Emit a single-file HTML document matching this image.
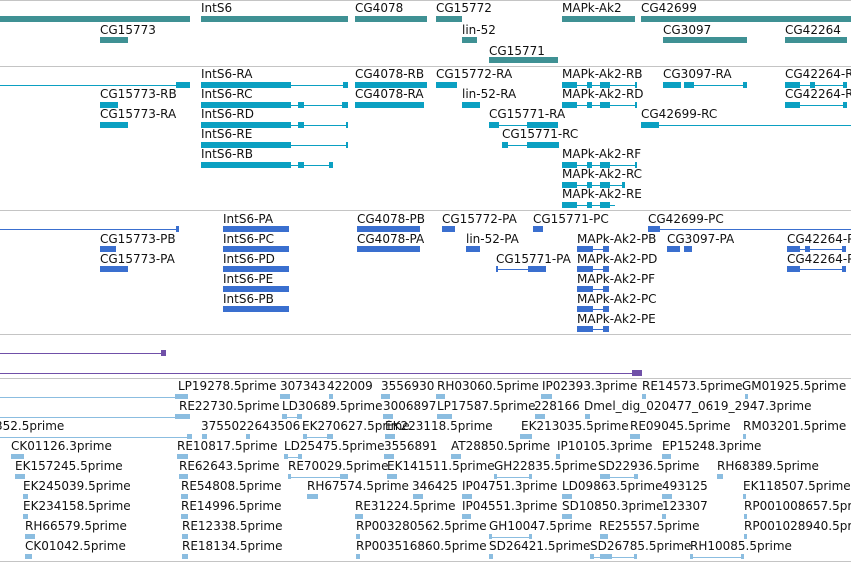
<!DOCTYPE html>
<html><head><meta charset="utf-8"><style>
body{margin:0;width:851px;height:562px;overflow:hidden;background:#fff;position:relative;font-family:"DejaVu Sans","Liberation Sans",sans-serif}
.t{position:absolute;font-size:12px;line-height:12px;color:#111;white-space:nowrap}
i{position:absolute;display:block}
.g{background:#3f9194}.c{background:#0ba0c2}.p{background:#3a6fcf}.e{background:#8bbde0}.u{background:#7050a8}
.s{position:absolute;left:0;width:851px;height:1px;background:#c4c4c4}
</style></head><body>
<div class="s" style="top:0"></div><div class="s" style="top:66"></div>
<div class="s" style="top:66px"></div><div class="s" style="top:210px"></div><div class="s" style="top:334px"></div><div class="s" style="top:378px"></div><div class="s" style="top:561px"></div>

<!-- gene track -->
<div class="t" style="left:201px;top:2px">IntS6</div><div class="t" style="left:355px;top:2px">CG4078</div><div class="t" style="left:436px;top:2px">CG15772</div><div class="t" style="left:562px;top:2px">MAPk-Ak2</div><div class="t" style="left:641px;top:2px">CG42699</div>
<div class="t" style="left:100px;top:24px">CG15773</div><div class="t" style="left:462px;top:24px">lin-52</div><div class="t" style="left:663px;top:24px">CG3097</div><div class="t" style="left:785px;top:24px">CG42264</div>
<div class="t" style="left:489px;top:45px">CG15771</div>
<i class="g" style="left:0;top:16px;width:190px;height:6px"></i><i class="g" style="left:201px;top:16px;width:147px;height:6px"></i><i class="g" style="left:355px;top:16px;width:72px;height:6px"></i><i class="g" style="left:436px;top:16px;width:26px;height:6px"></i><i class="g" style="left:562px;top:16px;width:73px;height:6px"></i><i class="g" style="left:641px;top:16px;width:210px;height:6px"></i>
<i class="g" style="left:100px;top:37px;width:28px;height:6px"></i><i class="g" style="left:462px;top:37px;width:15px;height:6px"></i><i class="g" style="left:663px;top:37px;width:84px;height:6px"></i><i class="g" style="left:785px;top:37px;width:62px;height:6px"></i>
<i class="g" style="left:489px;top:57px;width:69px;height:6px"></i>

<!-- transcript track -->
<div class="t" style="left:201px;top:68px">IntS6-RA</div><div class="t" style="left:355px;top:68px">CG4078-RB</div><div class="t" style="left:436px;top:68px">CG15772-RA</div><div class="t" style="left:562px;top:68px">MAPk-Ak2-RB</div><div class="t" style="left:663px;top:68px">CG3097-RA</div><div class="t" style="left:785px;top:68px">CG42264-RB</div>
<div class="t" style="left:100px;top:88px">CG15773-RB</div><div class="t" style="left:201px;top:88px">IntS6-RC</div><div class="t" style="left:355px;top:88px">CG4078-RA</div><div class="t" style="left:462px;top:88px">lin-52-RA</div><div class="t" style="left:562px;top:88px">MAPk-Ak2-RD</div><div class="t" style="left:785px;top:88px">CG42264-RA</div>
<div class="t" style="left:100px;top:108px">CG15773-RA</div><div class="t" style="left:201px;top:108px">IntS6-RD</div><div class="t" style="left:489px;top:108px">CG15771-RA</div><div class="t" style="left:641px;top:108px">CG42699-RC</div>
<div class="t" style="left:201px;top:128px">IntS6-RE</div><div class="t" style="left:502px;top:128px">CG15771-RC</div>
<div class="t" style="left:201px;top:148px">IntS6-RB</div><div class="t" style="left:562px;top:148px">MAPk-Ak2-RF</div>
<div class="t" style="left:562px;top:168px">MAPk-Ak2-RC</div>
<div class="t" style="left:562px;top:188px">MAPk-Ak2-RE</div>
<!-- r0 -->
<i class="c" style="left:0;top:85px;width:176px;height:1px"></i><i class="c" style="left:176px;top:82px;width:14px;height:6px"></i>
<i class="c" style="left:201px;top:82px;width:90px;height:6px"></i><i class="c" style="left:291px;top:85px;width:57px;height:1px"></i><i class="c" style="left:343px;top:82px;width:5px;height:6px"></i>
<i class="c" style="left:355px;top:82px;width:72px;height:6px"></i><i class="c" style="left:436px;top:82px;width:21px;height:6px"></i>
<i class="c" style="left:562px;top:82px;width:15px;height:6px"></i><i class="c" style="left:577px;top:85px;width:60px;height:1px"></i><i class="c" style="left:587px;top:82px;width:5px;height:6px"></i><i class="c" style="left:600px;top:82px;width:10px;height:6px"></i><i class="c" style="left:635px;top:82px;width:2px;height:6px"></i>
<i class="c" style="left:663px;top:82px;width:18px;height:6px"></i><i class="c" style="left:684px;top:82px;width:10px;height:6px"></i><i class="c" style="left:694px;top:85px;width:53px;height:1px"></i><i class="c" style="left:743px;top:82px;width:4px;height:6px"></i>
<i class="c" style="left:785px;top:82px;width:15px;height:6px"></i><i class="c" style="left:810px;top:82px;width:5px;height:6px"></i><i class="c" style="left:800px;top:85px;width:47px;height:1px"></i><i class="c" style="left:843px;top:82px;width:4px;height:6px"></i>
<!-- r1 -->
<i class="c" style="left:100px;top:102px;width:18px;height:6px"></i>
<i class="c" style="left:201px;top:102px;width:90px;height:6px"></i><i class="c" style="left:291px;top:105px;width:57px;height:1px"></i><i class="c" style="left:298px;top:102px;width:6px;height:6px"></i><i class="c" style="left:342px;top:102px;width:6px;height:6px"></i>
<i class="c" style="left:355px;top:102px;width:69px;height:6px"></i><i class="c" style="left:462px;top:102px;width:18px;height:6px"></i>
<i class="c" style="left:562px;top:102px;width:15px;height:6px"></i><i class="c" style="left:577px;top:105px;width:60px;height:1px"></i><i class="c" style="left:587px;top:102px;width:5px;height:6px"></i><i class="c" style="left:600px;top:102px;width:10px;height:6px"></i><i class="c" style="left:635px;top:102px;width:2px;height:6px"></i>
<i class="c" style="left:785px;top:102px;width:15px;height:6px"></i><i class="c" style="left:800px;top:105px;width:47px;height:1px"></i><i class="c" style="left:843px;top:102px;width:4px;height:6px"></i>
<!-- r2 -->
<i class="c" style="left:100px;top:122px;width:28px;height:6px"></i>
<i class="c" style="left:201px;top:122px;width:90px;height:6px"></i><i class="c" style="left:291px;top:125px;width:57px;height:1px"></i><i class="c" style="left:298px;top:122px;width:6px;height:6px"></i><i class="c" style="left:346px;top:122px;width:2px;height:6px"></i>
<i class="c" style="left:489px;top:122px;width:10px;height:6px"></i><i class="c" style="left:499px;top:125px;width:28px;height:1px"></i><i class="c" style="left:527px;top:122px;width:31px;height:6px"></i>
<i class="c" style="left:641px;top:122px;width:18px;height:6px"></i><i class="c" style="left:659px;top:125px;width:192px;height:1px"></i>
<!-- r3 -->
<i class="c" style="left:201px;top:142px;width:90px;height:6px"></i><i class="c" style="left:291px;top:145px;width:57px;height:1px"></i><i class="c" style="left:346px;top:142px;width:2px;height:6px"></i>
<i class="c" style="left:502px;top:142px;width:6px;height:6px"></i><i class="c" style="left:508px;top:145px;width:19px;height:1px"></i><i class="c" style="left:527px;top:142px;width:32px;height:6px"></i>
<!-- r4-6 -->
<i class="c" style="left:201px;top:162px;width:90px;height:6px"></i><i class="c" style="left:291px;top:165px;width:42px;height:1px"></i><i class="c" style="left:298px;top:162px;width:6px;height:6px"></i><i class="c" style="left:329px;top:162px;width:4px;height:6px"></i>
<i class="c" style="left:562px;top:162px;width:15px;height:6px"></i><i class="c" style="left:577px;top:165px;width:60px;height:1px"></i><i class="c" style="left:587px;top:162px;width:5px;height:6px"></i><i class="c" style="left:600px;top:162px;width:10px;height:6px"></i><i class="c" style="left:635px;top:162px;width:2px;height:6px"></i>
<i class="c" style="left:562px;top:182px;width:15px;height:6px"></i><i class="c" style="left:577px;top:185px;width:48px;height:1px"></i><i class="c" style="left:587px;top:182px;width:5px;height:6px"></i><i class="c" style="left:600px;top:182px;width:10px;height:6px"></i><i class="c" style="left:622px;top:182px;width:3px;height:6px"></i>
<i class="c" style="left:562px;top:202px;width:15px;height:6px"></i><i class="c" style="left:577px;top:205px;width:38px;height:1px"></i><i class="c" style="left:587px;top:202px;width:5px;height:6px"></i><i class="c" style="left:600px;top:202px;width:10px;height:6px"></i>

<!-- protein track -->
<div class="t" style="left:223px;top:213px">IntS6-PA</div><div class="t" style="left:357px;top:213px">CG4078-PB</div><div class="t" style="left:442px;top:213px">CG15772-PA</div><div class="t" style="left:533px;top:213px">CG15771-PC</div><div class="t" style="left:648px;top:213px">CG42699-PC</div>
<div class="t" style="left:100px;top:233px">CG15773-PB</div><div class="t" style="left:223px;top:233px">IntS6-PC</div><div class="t" style="left:357px;top:233px">CG4078-PA</div><div class="t" style="left:466px;top:233px">lin-52-PA</div><div class="t" style="left:577px;top:233px">MAPk-Ak2-PB</div><div class="t" style="left:667px;top:233px">CG3097-PA</div><div class="t" style="left:787px;top:233px">CG42264-PB</div>
<div class="t" style="left:100px;top:253px">CG15773-PA</div><div class="t" style="left:223px;top:253px">IntS6-PD</div><div class="t" style="left:496px;top:253px">CG15771-PA</div><div class="t" style="left:577px;top:253px;background:#fff">MAPk-Ak2-PD</div><div class="t" style="left:787px;top:253px">CG42264-PA</div>
<div class="t" style="left:223px;top:273px">IntS6-PE</div><div class="t" style="left:577px;top:273px">MAPk-Ak2-PF</div>
<div class="t" style="left:223px;top:293px">IntS6-PB</div><div class="t" style="left:577px;top:293px">MAPk-Ak2-PC</div>
<div class="t" style="left:577px;top:313px">MAPk-Ak2-PE</div>
<i class="p" style="left:0;top:229px;width:179px;height:1px"></i><i class="p" style="left:176px;top:226px;width:3px;height:6px"></i>
<i class="p" style="left:223px;top:226px;width:66px;height:6px"></i><i class="p" style="left:357px;top:226px;width:63px;height:6px"></i><i class="p" style="left:442px;top:226px;width:13px;height:6px"></i><i class="p" style="left:533px;top:226px;width:10px;height:6px"></i><i class="p" style="left:648px;top:226px;width:12px;height:6px"></i><i class="p" style="left:660px;top:229px;width:191px;height:1px"></i>
<i class="p" style="left:100px;top:246px;width:16px;height:6px"></i><i class="p" style="left:223px;top:246px;width:66px;height:6px"></i><i class="p" style="left:357px;top:246px;width:63px;height:6px"></i><i class="p" style="left:466px;top:246px;width:14px;height:6px"></i>
<i class="p" style="left:667px;top:246px;width:13px;height:6px"></i><i class="p" style="left:684px;top:246px;width:8px;height:6px"></i>
<i class="p" style="left:787px;top:246px;width:13px;height:6px"></i><i class="p" style="left:805px;top:246px;width:5px;height:6px"></i><i class="p" style="left:800px;top:249px;width:46px;height:1px"></i><i class="p" style="left:842px;top:246px;width:4px;height:6px"></i>
<i class="p" style="left:100px;top:266px;width:28px;height:6px"></i><i class="p" style="left:223px;top:266px;width:66px;height:6px"></i><i class="p" style="left:496px;top:269px;width:32px;height:1px"></i><i class="p" style="left:496px;top:266px;width:2px;height:6px"></i><i class="p" style="left:528px;top:266px;width:18px;height:6px"></i>
<i class="p" style="left:787px;top:266px;width:13px;height:6px"></i><i class="p" style="left:800px;top:269px;width:46px;height:1px"></i><i class="p" style="left:842px;top:266px;width:4px;height:6px"></i>
<i class="p" style="left:223px;top:286px;width:66px;height:6px"></i><i class="p" style="left:223px;top:306px;width:66px;height:6px"></i>
<i class="p" style="left:577px;top:246px;width:16px;height:6px"></i><i class="p" style="left:593px;top:249px;width:16px;height:1px"></i><i class="p" style="left:603px;top:246px;width:6px;height:6px"></i>
<i class="p" style="left:577px;top:266px;width:16px;height:6px"></i><i class="p" style="left:593px;top:269px;width:16px;height:1px"></i><i class="p" style="left:603px;top:266px;width:6px;height:6px"></i>
<i class="p" style="left:577px;top:286px;width:16px;height:6px"></i><i class="p" style="left:593px;top:289px;width:16px;height:1px"></i><i class="p" style="left:603px;top:286px;width:6px;height:6px"></i>
<i class="p" style="left:577px;top:306px;width:16px;height:6px"></i><i class="p" style="left:593px;top:309px;width:16px;height:1px"></i><i class="p" style="left:603px;top:306px;width:6px;height:6px"></i>
<i class="p" style="left:577px;top:326px;width:16px;height:6px"></i><i class="p" style="left:593px;top:329px;width:16px;height:1px"></i><i class="p" style="left:603px;top:326px;width:6px;height:6px"></i>

<!-- purple -->
<i class="u" style="left:0;top:353px;width:165px;height:1px"></i><i class="u" style="left:161px;top:350px;width:5px;height:6px"></i>
<i class="u" style="left:0;top:373px;width:632px;height:1px"></i><i class="u" style="left:632px;top:370px;width:10px;height:6px"></i>

<!-- EST labels -->
<div class="t" style="left:178px;top:380px">LP19278.5prime</div><div class="t" style="left:280px;top:380px">307343</div><div class="t" style="left:327px;top:380px">422009</div><div class="t" style="left:381px;top:380px">3556930</div><div class="t" style="left:437px;top:380px">RH03060.5prime</div><div class="t" style="left:542px;top:380px">IP02393.3prime</div><div class="t" style="left:642px;top:380px">RE14573.5prime</div><div class="t" style="left:742px;top:380px">GM01925.5prime</div>
<div class="t" style="left:179px;top:400px">RE22730.5prime</div><div class="t" style="left:282px;top:400px">LD30689.5prime</div><div class="t" style="left:383px;top:400px">3006897</div><div class="t" style="left:437px;top:400px">LP17587.5prime</div><div class="t" style="left:534px;top:400px">228166</div><div class="t" style="left:584px;top:400px">Dmel_dig_020477_0619_2947.3prime</div>
<div class="t" style="left:-5px;top:420px">352.5prime</div><div class="t" style="left:201px;top:420px">3755022643506</div><div class="t" style="left:302px;top:420px">EK270627.5prime</div><div class="t" style="left:385px;top:420px">EK223118.5prime</div><div class="t" style="left:521px;top:420px">EK213035.5prime</div><div class="t" style="left:630px;top:420px">RE09045.5prime</div><div class="t" style="left:743px;top:420px">RM03201.5prime</div>
<div class="t" style="left:11px;top:440px">CK01126.3prime</div><div class="t" style="left:177px;top:440px">RE10817.5prime</div><div class="t" style="left:284px;top:440px">LD25475.5prime</div><div class="t" style="left:384px;top:440px">3556891</div><div class="t" style="left:451px;top:440px">AT28850.5prime</div><div class="t" style="left:557px;top:440px">IP10105.3prime</div><div class="t" style="left:662px;top:440px">EP15248.3prime</div>
<div class="t" style="left:15px;top:460px">EK157245.5prime</div><div class="t" style="left:179px;top:460px">RE62643.5prime</div><div class="t" style="left:288px;top:460px">RE70029.5prime</div><div class="t" style="left:387px;top:460px">EK141511.5prime</div><div class="t" style="left:494px;top:460px">GH22835.5prime</div><div class="t" style="left:598px;top:460px">SD22936.5prime</div><div class="t" style="left:717px;top:460px">RH68389.5prime</div>
<div class="t" style="left:23px;top:480px">EK245039.5prime</div><div class="t" style="left:181px;top:480px">RE54808.5prime</div><div class="t" style="left:307px;top:480px">RH67574.5prime</div><div class="t" style="left:412px;top:480px">346425</div><div class="t" style="left:462px;top:480px">IP04751.3prime</div><div class="t" style="left:562px;top:480px">LD09863.5prime</div><div class="t" style="left:662px;top:480px">493125</div><div class="t" style="left:743px;top:480px">EK118507.5prime</div>
<div class="t" style="left:23px;top:500px">EK234158.5prime</div><div class="t" style="left:181px;top:500px">RE14996.5prime</div><div class="t" style="left:355px;top:500px">RE31224.5prime</div><div class="t" style="left:462px;top:500px">IP04551.3prime</div><div class="t" style="left:562px;top:500px">SD10850.3prime</div><div class="t" style="left:662px;top:500px">123307</div><div class="t" style="left:744px;top:500px">RP001008657.5prime</div>
<div class="t" style="left:25px;top:520px">RH66579.5prime</div><div class="t" style="left:182px;top:520px">RE12338.5prime</div><div class="t" style="left:356px;top:520px">RP003280562.5prime</div><div class="t" style="left:489px;top:520px">GH10047.5prime</div><div class="t" style="left:599px;top:520px">RE25557.5prime</div><div class="t" style="left:744px;top:520px">RP001028940.5prime</div>
<div class="t" style="left:25px;top:540px">CK01042.5prime</div><div class="t" style="left:182px;top:540px">RE18134.5prime</div><div class="t" style="left:356px;top:540px">RP003516860.5prime</div><div class="t" style="left:489px;top:540px">SD26421.5prime</div><div class="t" style="left:590px;top:540px">SD26785.5prime</div><div class="t" style="left:690px;top:540px">RH10085.5prime</div>

<!-- EST glyphs -->
<i class="e" style="left:0;top:397px;width:175px;height:1px"></i><i class="e" style="left:175px;top:394px;width:13px;height:5px"></i><i class="e" style="left:280px;top:394px;width:10px;height:5px"></i><i class="e" style="left:329px;top:394px;width:4px;height:5px"></i><i class="e" style="left:381px;top:394px;width:9px;height:5px"></i><i class="e" style="left:436px;top:394px;width:9px;height:5px"></i><i class="e" style="left:541px;top:394px;width:11px;height:5px"></i><i class="e" style="left:642px;top:394px;width:4px;height:5px"></i><i class="e" style="left:745px;top:394px;width:3px;height:5px"></i>
<i class="e" style="left:0;top:417px;width:175px;height:1px"></i><i class="e" style="left:175px;top:414px;width:15px;height:5px"></i><i class="e" style="left:282px;top:417px;width:20px;height:1px"></i><i class="e" style="left:282px;top:414px;width:5px;height:5px"></i><i class="e" style="left:297px;top:414px;width:5px;height:5px"></i><i class="e" style="left:383px;top:414px;width:10px;height:5px"></i><i class="e" style="left:437px;top:414px;width:15px;height:5px"></i><i class="e" style="left:535px;top:414px;width:10px;height:5px"></i><i class="e" style="left:585px;top:414px;width:5px;height:5px"></i>
<i class="e" style="left:0;top:437px;width:187px;height:1px"></i><i class="e" style="left:187px;top:434px;width:5px;height:5px"></i><i class="e" style="left:202px;top:434px;width:5px;height:5px"></i><i class="e" style="left:246px;top:434px;width:4px;height:5px"></i><i class="e" style="left:303px;top:437px;width:30px;height:1px"></i><i class="e" style="left:303px;top:434px;width:4px;height:5px"></i><i class="e" style="left:327px;top:434px;width:6px;height:5px"></i><i class="e" style="left:385px;top:434px;width:10px;height:5px"></i><i class="e" style="left:520px;top:434px;width:12px;height:5px"></i><i class="e" style="left:630px;top:434px;width:10px;height:5px"></i><i class="e" style="left:743px;top:434px;width:3px;height:5px"></i>
<i class="e" style="left:11px;top:454px;width:13px;height:5px"></i><i class="e" style="left:177px;top:454px;width:11px;height:5px"></i><i class="e" style="left:284px;top:457px;width:18px;height:1px"></i><i class="e" style="left:284px;top:454px;width:4px;height:5px"></i><i class="e" style="left:298px;top:454px;width:4px;height:5px"></i><i class="e" style="left:384px;top:454px;width:10px;height:5px"></i><i class="e" style="left:451px;top:454px;width:10px;height:5px"></i><i class="e" style="left:556px;top:454px;width:4px;height:5px"></i><i class="e" style="left:662px;top:454px;width:9px;height:5px"></i>
<i class="e" style="left:15px;top:474px;width:10px;height:5px"></i><i class="e" style="left:179px;top:474px;width:9px;height:5px"></i><i class="e" style="left:288px;top:477px;width:60px;height:1px"></i><i class="e" style="left:288px;top:474px;width:3px;height:5px"></i><i class="e" style="left:340px;top:474px;width:8px;height:5px"></i><i class="e" style="left:387px;top:474px;width:10px;height:5px"></i><i class="e" style="left:494px;top:477px;width:38px;height:1px"></i><i class="e" style="left:494px;top:474px;width:3px;height:5px"></i><i class="e" style="left:529px;top:474px;width:3px;height:5px"></i><i class="e" style="left:600px;top:477px;width:38px;height:1px"></i><i class="e" style="left:600px;top:474px;width:10px;height:5px"></i><i class="e" style="left:634px;top:474px;width:4px;height:5px"></i><i class="e" style="left:717px;top:474px;width:6px;height:5px"></i>
<i class="e" style="left:23px;top:494px;width:5px;height:5px"></i><i class="e" style="left:181px;top:494px;width:7px;height:5px"></i><i class="e" style="left:307px;top:494px;width:11px;height:5px"></i><i class="e" style="left:413px;top:494px;width:10px;height:5px"></i><i class="e" style="left:462px;top:494px;width:10px;height:5px"></i><i class="e" style="left:562px;top:494px;width:10px;height:5px"></i><i class="e" style="left:662px;top:494px;width:10px;height:5px"></i><i class="e" style="left:743px;top:494px;width:3px;height:5px"></i>
<i class="e" style="left:23px;top:514px;width:5px;height:5px"></i><i class="e" style="left:181px;top:514px;width:7px;height:5px"></i><i class="e" style="left:355px;top:514px;width:8px;height:5px"></i><i class="e" style="left:462px;top:514px;width:9px;height:5px"></i><i class="e" style="left:562px;top:514px;width:10px;height:5px"></i><i class="e" style="left:662px;top:514px;width:4px;height:5px"></i><i class="e" style="left:744px;top:514px;width:3px;height:5px"></i>
<i class="e" style="left:25px;top:534px;width:10px;height:5px"></i><i class="e" style="left:182px;top:534px;width:6px;height:5px"></i><i class="e" style="left:356px;top:534px;width:4px;height:5px"></i><i class="e" style="left:489px;top:537px;width:43px;height:1px"></i><i class="e" style="left:489px;top:534px;width:3px;height:5px"></i><i class="e" style="left:529px;top:534px;width:3px;height:5px"></i><i class="e" style="left:600px;top:534px;width:8px;height:5px"></i><i class="e" style="left:744px;top:534px;width:3px;height:5px"></i>
<i class="e" style="left:25px;top:554px;width:7px;height:5px"></i><i class="e" style="left:182px;top:554px;width:6px;height:5px"></i><i class="e" style="left:356px;top:554px;width:4px;height:5px"></i><i class="e" style="left:489px;top:554px;width:4px;height:5px"></i><i class="e" style="left:590px;top:557px;width:47px;height:1px"></i><i class="e" style="left:590px;top:554px;width:4px;height:5px"></i><i class="e" style="left:600px;top:554px;width:12px;height:5px"></i><i class="e" style="left:634px;top:554px;width:3px;height:5px"></i><i class="e" style="left:690px;top:557px;width:54px;height:1px"></i><i class="e" style="left:690px;top:554px;width:3px;height:5px"></i><i class="e" style="left:741px;top:554px;width:3px;height:5px"></i>
</body></html>
